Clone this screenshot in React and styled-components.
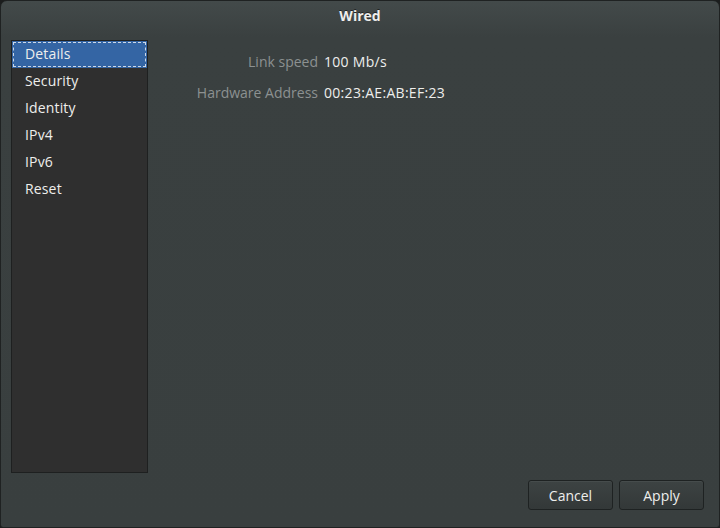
import React from 'react'
import styled, { createGlobalStyle } from 'styled-components'

const GlobalStyle = createGlobalStyle`
  html, body {
    margin: 0;
    padding: 0;
    background: #1b1d1d;
  }
  body {
    font-family: "Open Sans", "Noto Sans", sans-serif;
    font-size: 14px;
  }
`

const Window = styled.div`
  width: 720px;
  height: 528px;
  box-sizing: border-box;
  border: 1px solid #1f2222;
  border-radius: 7px 7px 3px 3px;
  background: linear-gradient(#434a4a 0px, #3a4040 36px, #393f3f 100%);
  display: flex;
  flex-direction: column;
  overflow: hidden;
  color: #eeeeec;
`

const TitleBar = styled.div`
  height: 29px;
  padding-bottom: 2px;
  display: flex;
  align-items: center;
  justify-content: center;
  font-weight: 700;
  font-size: 14px;
  color: #eeeeec;
  text-shadow: 0 -1px rgba(0, 0, 0, 0.5);
`

const Body = styled.div`
  flex: 1;
  display: flex;
  padding: 8px 0 0 10px;
`

const Sidebar = styled.ul`
  list-style: none;
  margin: 0 0 54px;
  padding: 0;
  width: 137px;
  background: #2f2f2f;
  border: 1px solid #1e2020;
  box-sizing: border-box;
`

const Item = styled.li`
  height: 27px;
  display: flex;
  align-items: center;
  padding: 0 0 2px 13px;
  box-sizing: border-box;
  color: #eeeeec;
  letter-spacing: 0.15px;
  background: ${p => (p.$active ? '#3465a4' : 'transparent')};
  outline: ${p => (p.$active ? '1px dashed rgba(255,255,255,0.75)' : 'none')};
  outline-offset: -2px;
`

const Main = styled.div`
  flex: 1;
  display: flex;
  flex-direction: column;
  padding: 12px 15px 17px 0;
`

const Info = styled.div`
  display: grid;
  grid-template-columns: 170px auto;
  column-gap: 6px;
  row-gap: 11px;
  justify-content: start;
`

const Label = styled.div`
  text-align: right;
  color: #8c9191;
  line-height: 20px;
`

const Value = styled.div`
  color: #eeeeec;
  line-height: 20px;
  letter-spacing: 0.3px;
`

const Buttons = styled.div`
  margin-top: auto;
  display: flex;
  justify-content: flex-end;
  gap: 6px;
`

const Button = styled.button`
  width: 85px;
  height: 30px;
  padding: 0;
  font-family: inherit;
  font-size: 14px;
  color: #eeeeec;
  border: 1px solid #1e2222;
  border-radius: 3px;
  background: linear-gradient(#3d4343, #333838);
  box-shadow: inset 0 1px rgba(255, 255, 255, 0.05);
`

const items = ['Details', 'Security', 'Identity', 'IPv4', 'IPv6', 'Reset']

export default function App() {
  return (
    <>
      <GlobalStyle />
      <Window>
        <TitleBar>Wired</TitleBar>
        <Body>
          <Sidebar>
            {items.map((it, i) => (
              <Item key={it} $active={i === 0}>{it}</Item>
            ))}
          </Sidebar>
          <Main>
            <Info>
              <Label>Link speed</Label>
              <Value>100 Mb/s</Value>
              <Label>Hardware Address</Label>
              <Value>00:23:AE:AB:EF:23</Value>
            </Info>
            <Buttons>
              <Button>Cancel</Button>
              <Button>Apply</Button>
            </Buttons>
          </Main>
        </Body>
      </Window>
    </>
  )
}
